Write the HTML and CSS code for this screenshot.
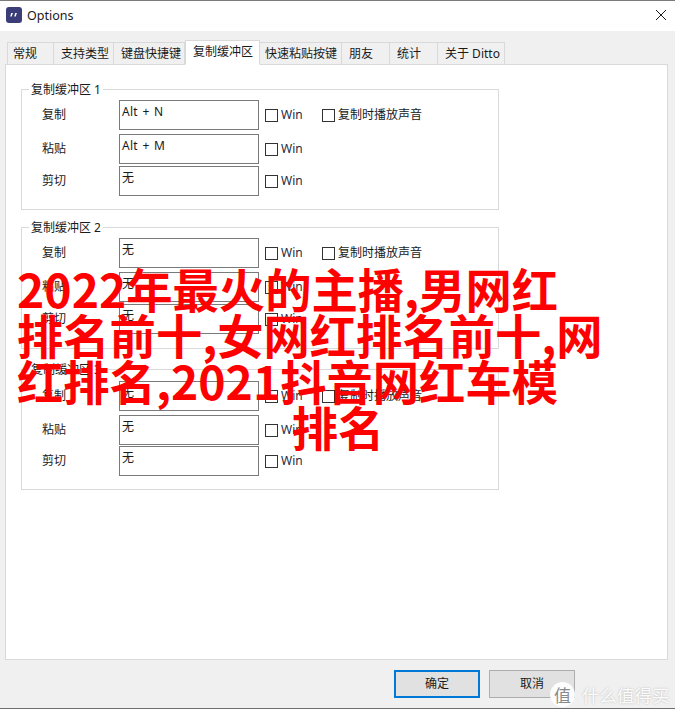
FILE: index.html
```html
<!DOCTYPE html>
<html lang="zh-CN">
<head>
    <meta charset="UTF-8">
    <title>Options</title>
    <link rel="stylesheet" href="styles.css">
</head>
<body>
    <div class="window">
        <div class="titlebar">
            <svg class="app-icon" width="16" height="16" viewBox="0 0 16 16">
                <rect width="16" height="16" rx="3" fill="#3a3d78"/>
                <path d="M4.200 9.500 5.200 6H6.900L5.700 9.500zM8.200 9.500 9.200 6H10.900L9.700 9.500z" fill="#fff"/>
            </svg>
            <span class="title">Options</span>
            <svg class="close" width="10" height="10" viewBox="0 0 10 10">
                <path d="M0 0 10 10M10 0 0 10" stroke="#1a1a1a" stroke-width="1" fill="none"/>
            </svg>
        </div>

        <div class="content">
            <div class="tabs">
                <div class="tab">常规</div>
                <div class="tab">支持类型</div>
                <div class="tab">键盘快捷键</div>
                <div class="tab active">复制缓冲区</div>
                <div class="tab">快速粘贴按键</div>
                <div class="tab">朋友</div>
                <div class="tab">统计</div>
                <div class="tab">关于 Ditto</div>
            </div>

            <div class="panel">
                <fieldset class="group group-1">
                    <legend>复制缓冲区 1</legend>
                    <div class="row row-copy">
                        <span class="row-label">复制</span>
                        <div class="hotkey">Alt + N</div>
                        <label class="check"><span class="box"></span>Win</label>
                        <label class="check check-sound"><span class="box"></span>复制时播放声音</label>
                    </div>
                    <div class="row row-paste">
                        <span class="row-label">粘贴</span>
                        <div class="hotkey">Alt + M</div>
                        <label class="check"><span class="box"></span>Win</label>
                    </div>
                    <div class="row row-cut">
                        <span class="row-label">剪切</span>
                        <div class="hotkey">无</div>
                        <label class="check"><span class="box"></span>Win</label>
                    </div>
                </fieldset>

                <fieldset class="group group-2">
                    <legend>复制缓冲区 2</legend>
                    <div class="row row-copy">
                        <span class="row-label">复制</span>
                        <div class="hotkey">无</div>
                        <label class="check"><span class="box"></span>Win</label>
                        <label class="check check-sound"><span class="box"></span>复制时播放声音</label>
                    </div>
                    <div class="row row-paste">
                        <span class="row-label">粘贴</span>
                        <div class="hotkey">无</div>
                        <label class="check"><span class="box"></span>Win</label>
                    </div>
                    <div class="row row-cut">
                        <span class="row-label">剪切</span>
                        <div class="hotkey">无</div>
                        <label class="check"><span class="box"></span>Win</label>
                    </div>
                </fieldset>

                <fieldset class="group group-3">
                    <legend>复制缓冲区 3</legend>
                    <div class="row row-copy">
                        <span class="row-label">复制</span>
                        <div class="hotkey">无</div>
                        <label class="check"><span class="box"></span>Win</label>
                        <label class="check check-sound"><span class="box"></span>复制时播放声音</label>
                    </div>
                    <div class="row row-paste">
                        <span class="row-label">粘贴</span>
                        <div class="hotkey">无</div>
                        <label class="check"><span class="box"></span>Win</label>
                    </div>
                    <div class="row row-cut">
                        <span class="row-label">剪切</span>
                        <div class="hotkey">无</div>
                        <label class="check"><span class="box"></span>Win</label>
                    </div>
                </fieldset>
            </div>

            <div class="footer">
                <button class="btn btn-default">确定</button>
                <button class="btn">取消</button>
            </div>
        </div>
    </div>

    <div class="headline">
        <div>2022年最火的主播,男网红</div>
        <div>排名前十,女网红排名前十,网</div>
        <div>红排名,2021抖音网红车模</div>
        <div class="headline-last">排名</div>
    </div>

    <div class="watermark">
        <span class="watermark-logo">值</span>
        <span>什么值得买</span>
    </div>
</body>
</html>
```

FILE: styles.css
```css
* {
    box-sizing: border-box;
}
html, body {
    margin: 0;
    padding: 0;
}
body {
    width: 675px;
    height: 711px;
    position: relative;
    overflow: hidden;
    background: #fff;
    font-family: "Noto Sans", "Noto Sans CJK SC", sans-serif;
    font-size: 12px;
    line-height: 16px;
    color: #1a1a1a;
}
.window {
    height: 709px;
    border-top: 1px solid #7a7a7a;
    border-bottom: 1px solid #6e6e6e;
    display: flex;
    flex-direction: column;
}

/* title bar */
.titlebar {
    height: 30px;
    flex: none;
    display: flex;
    align-items: center;
    padding: 0 9px 0 6px;
    background: #fff;
}
.app-icon, .close {
    margin-bottom: 2px;
}
.title {
    margin-left: 5px;
    font-size: 12.5px;
    flex: 1;
}

/* body of the dialog */
.content {
    flex: 1;
    background: #f0f0f0;
    padding: 9px 7px 0 5px;
    display: flex;
    flex-direction: column;
}
.tabs {
    display: grid;
    grid-template-columns: 47px 60px 71px 75px 82px 48px 48px 67px;
    align-items: end;
    height: 25px;
    padding-left: 2px;
    margin-bottom: -1px;
    position: relative;
    z-index: 1;
}
.tab {
    height: 23px;
    padding: 3px 0 0 7px;
    border: 1px solid #d9d9d9;
    border-left-width: 0;
    background: #f0f0f0;
    white-space: nowrap;
}
.tab:first-child {
    border-left-width: 1px;
    padding-left: 5px;
}
.tab.active {
    height: 25px;
    padding-left: 7px;
    background: #fff;
    border-left-width: 1px;
    border-bottom-color: #fff;
}
.tab.active + .tab {
    padding-left: 5px;
}
.panel {
    height: 596px;
    flex: none;
    background: #fff;
    border: 1px solid #d9d9d9;
    padding: 16px 0 0 15px;
}

/* groups */
.group {
    width: 478px;
    height: 129px;
    margin: 0;
    padding: 0 0 0 20px;
    border: 1px solid #d9d9d9;
    border-radius: 0;
}
.group-2 {
    height: 130px;
    margin-top: 9px;
}
.group-3 {
    margin-top: 12px;
}
.group legend {
    margin-left: -13px;
    padding: 1px 2px 0;
    line-height: 16px;
}
.row {
    display: flex;
    align-items: center;
    height: 30px;
}
.row-copy {
    margin-top: 2px;
}
.group-3 .row-copy {
    margin-top: 3px;
}
.row-paste {
    margin-top: 4px;
}
.row-cut {
    margin-top: 2px;
}
.group-3 .row-cut {
    margin-top: 1px;
}
.row-label {
    width: 77px;
    flex: none;
}
.hotkey {
    width: 140px;
    height: 30px;
    flex: none;
    border: 1px solid #7a7a7a;
    padding: 3px 0 0 2px;
    background: #fff;
    letter-spacing: 0.3px;
    word-spacing: 1px;
}
.check {
    display: flex;
    align-items: center;
    margin-left: 6px;
    width: 51px;
    color: #1f2a44;
}
.check-sound {
    width: auto;
    color: #1a1a1a;
}
.box {
    width: 13px;
    height: 13px;
    border: 1px solid #333;
    background: #fff;
    margin-right: 3px;
    flex: none;
}

/* buttons */
.footer {
    display: flex;
    justify-content: flex-end;
    gap: 9px;
    padding: 10px 93px 0 0;
}
.btn {
    width: 86px;
    height: 28px;
    padding: 0;
    border: 1px solid #adadad;
    background: #e1e1e1;
    font: inherit;
    color: #1a1a1a;
}
.btn-default {
    border: 2px solid #0078d7;
}

/* red title laid over the screenshot */
.headline {
    position: absolute;
    left: 17px;
    top: 265px;
    width: 642px;
    font-family: "Noto Sans CJK SC", sans-serif;
    font-size: 46.3px;
    line-height: 46px;
    font-weight: 700;
    color: #f00;
    white-space: nowrap;
}
.headline-last {
    text-align: center;
}

/* site watermark in the corner */
.watermark {
    position: absolute;
    left: 550px;
    top: 682px;
    display: flex;
    align-items: center;
    gap: 7px;
    font-family: "Noto Sans CJK SC", sans-serif;
    font-size: 17.5px;
    line-height: 24px;
    color: rgba(255, 255, 255, 0.95);
    text-shadow: 0 0 2px rgba(0, 0, 0, 0.25);
    white-space: nowrap;
}
.watermark-logo {
    width: 25px;
    height: 25px;
    border-radius: 50%;
    background: rgba(255, 255, 255, 0.92);
    color: #8a8a8a;
    font-size: 17px;
    line-height: 25px;
    text-align: center;
    text-shadow: none;
}
```
